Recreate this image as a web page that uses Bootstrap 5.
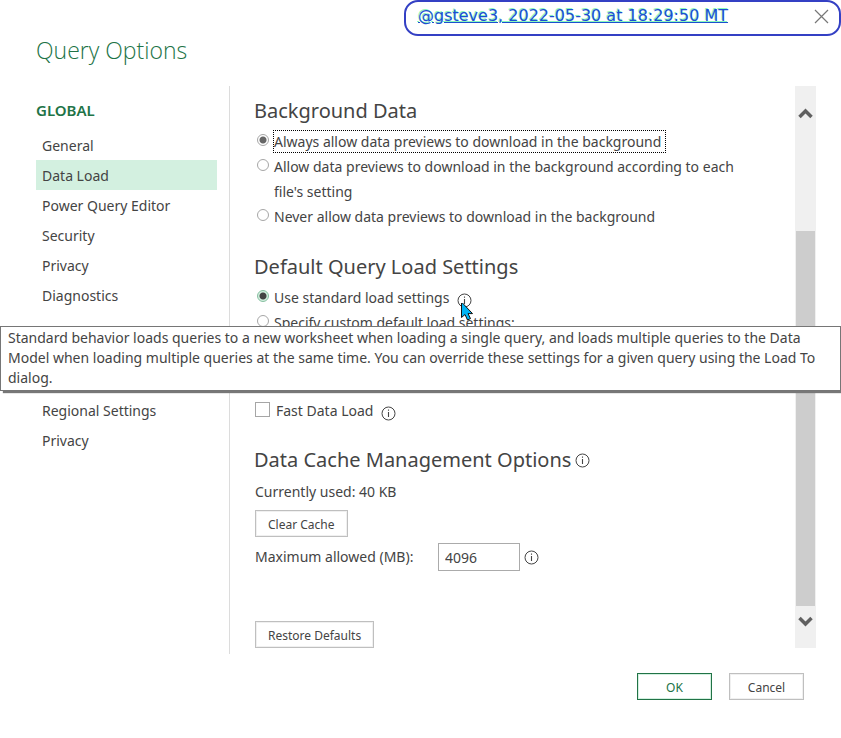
<!DOCTYPE html>
<html lang="en">
<head>
<meta charset="utf-8">
<meta name="viewport" content="width=device-width, initial-scale=1">
<title>Query Options</title>
<link href="https://cdn.jsdelivr.net/npm/bootstrap@5.3.0/dist/css/bootstrap.min.css" rel="stylesheet">
<style>
body { font-family: "Noto Sans", "Open Sans", sans-serif; font-size: 14px; line-height: 20px; color: #444; background: #fff; }
.dialog-box { padding: 36px 25px 36px 36px; }
.dialog-title { font-family: "Open Sans", sans-serif; font-size: 23px; line-height: 28px; font-weight: 300; color: #217346; margin: 0 0 22px; }
.stamp { position: absolute; top: 0; right: 0; width: 437px; height: 36px; padding: 0 10px 4px 12px; border: 2px solid #3440c4; border-radius: 14px; background: #fff; }
.stamp a { font-family: "DejaVu Sans", sans-serif; font-size: 16px; line-height: 20px; color: #1c4fd0; text-decoration: underline; text-shadow: -1px -1px 0 #3df58a99; }
.close-x { border: 0; background: none; padding: 0; line-height: 0; }
.options-nav { width: 194px; padding: 14px 12px 0 0; border-right: 1px solid #dcdcdc; }
.options-nav h2 { font-size: 15px; line-height: 20px; font-weight: 600; color: #217346; margin: 0 0 10px; }
.options-nav .nav-link { color: #444; padding: 6px 6px 4px; line-height: 20px; }
.options-nav .nav-link.active { background: #d3f0e0; }
.workbook-nav { margin-top: 85px; }
.pane { padding: 10px 44px 6px 24px; min-width: 0; }
.pane h2 { font-size: 20px; line-height: 30px; font-weight: 400; margin: 0; }
.choice { display: flex; line-height: 25px; }
.choice input { appearance: none; flex: none; width: 12px; height: 12px; margin: 5px 5px 0 3px; border: 1px solid #a6a6a6; border-radius: 50%; background: #fff; }
.choice input:checked { background: radial-gradient(circle, #666 0 3px, #fff 4px); }
.choice input.hot:checked { border-color: #86bfa0; background: radial-gradient(circle, #444 0 3px, #d3f0e0 4px); }
.focused-label { outline: 1px dotted #000; line-height: 21px; margin: 2px 0; padding-right: 4px; }
.choice input[type=checkbox] { width: 15px; height: 15px; margin: 4px 6px 0 1px; border-radius: 0; }
.info { flex: none; width: 15px; height: 15px; }
.bg-rows { margin-top: 3px; }
.load-section { margin-top: 23px; margin-bottom: 63px; }
.load-rows { margin-top: 3px; }
.cache-section { margin-top: 22px; }
.plain-btn { font-size: 12px; line-height: 17px; height: 27px; padding: 5px 12px 3px; color: #444; background: #fff; border: 1px solid #bfbfbf; border-radius: 0; box-shadow: inset 0 0 0 1px #f0f0f0; }
.cache-body { padding-left: 1px; }
.cache-used { margin: 7px 0 8px; }
.size-row { margin-top: 6px; margin-bottom: 50px; }
.dialog-btn { width: 75px; }
.ok-btn { color: #217346; border-color: #217346; box-shadow: inset 0 0 0 1px #d3f0e0; }
.size-box { width: 82px; height: 28px; padding: 2px 6px; font-size: 14px; color: #444; border: 1px solid #ababab; border-radius: 0; }
.size-label { width: 183px; }
.scroll-track { width: 21px; padding: 0 1px; margin-bottom: 6px; background: #f0f0f0; }
.scroll-thumb { flex: 375 0 0; background: #cdcdcd; }
.scroll-head { flex: 124 0 0; padding-top: 21px; }
.scroll-tail { flex: 33 0 0; padding-top: 9px; }
.scroll-head, .scroll-tail { line-height: 0; text-align: center; }
.dialog-actions { padding: 19px 12px 0 0; gap: 17px; }
.tip { position: absolute; top: 326px; left: 0; right: 0; padding: 1px 7px 2px; border: 1px solid #767676; background: #fff; box-shadow: 3px 2px 1px #777; }
.pointer { position: absolute; left: 1px; top: 14px; z-index: 5; }
</style>
</head>
<body class="position-relative overflow-x-hidden">
<svg class="d-none"><symbol id="info" viewBox="0 0 15 15"><circle cx="7.5" cy="7.5" r="6.5" fill="#fff" stroke="#444"/><path d="M7.5 6v5M7.5 3.5v1.3" stroke="#444" stroke-width="1.1"/></symbol></svg>
<div class="stamp d-flex align-items-center justify-content-between">
  <a href="#stamp">@gsteve3, 2022-05-30 at 18:29:50 MT</a>
  <button class="close-x" type="button" aria-label="Close"><svg width="15" height="15" viewBox="0 0 15 15"><path d="M1 1l13 13M14 1L1 14" stroke="#777" stroke-width="1.2"/></svg></button>
</div>
<div class="dialog-box">
  <h1 class="dialog-title">Query Options</h1>
  <div class="d-flex">
    <nav class="options-nav flex-shrink-0">
      <h2>GLOBAL</h2>
      <div class="nav flex-column">
        <a class="nav-link" href="#general">General</a>
        <a class="nav-link active" href="#load">Data Load</a>
        <a class="nav-link" href="#editor">Power Query Editor</a>
        <a class="nav-link" href="#security">Security</a>
        <a class="nav-link" href="#privacy">Privacy</a>
        <a class="nav-link" href="#diagnostics">Diagnostics</a>
      </div>
      <div class="nav flex-column workbook-nav">
        <a class="nav-link" href="#regional">Regional Settings</a>
        <a class="nav-link" href="#book-privacy">Privacy</a>
      </div>
    </nav>
    <main class="pane flex-grow-1">
      <section>
        <h2>Background Data</h2>
        <div class="bg-rows">
          <div class="choice"><input type="radio" name="bg" id="bg1" checked><label class="focused-label" for="bg1">Always allow data previews to download in the background</label></div>
          <div class="choice"><input type="radio" name="bg" id="bg2"><label for="bg2">Allow data previews to download in the background according to each file's setting</label></div>
          <div class="choice"><input type="radio" name="bg" id="bg3"><label for="bg3">Never allow data previews to download in the background</label></div>
        </div>
      </section>
      <section class="load-section">
        <h2>Default Query Load Settings</h2>
        <div class="load-rows">
          <div class="choice"><input class="hot" type="radio" name="ql" id="ql1" checked><label for="ql1">Use standard load settings</label>
            <span class="position-relative ms-2 mt-1"><svg class="info d-block mt-1"><use href="#info"/></svg>
            <svg class="pointer" width="16" height="20" viewBox="0 0 16 20"><path d="M3.500 -1v15.500l3.500-3 2.500 5.500 3-1.400-2.500-5h4.500z" fill="#00b4f5" stroke="#111"/></svg></span></div>
          <div class="choice"><input type="radio" name="ql" id="ql2"><label for="ql2">Specify custom default load settings:</label></div>
        </div>
      </section>
      <div class="choice"><input type="checkbox" id="fast"><label for="fast">Fast Data Load</label><svg class="info ms-2 mt-2"><use href="#info"/></svg></div>
      <section class="cache-section">
        <div class="d-flex align-items-center"><h2>Data Cache Management Options</h2><svg class="info ms-1"><use href="#info"/></svg></div>
        <div class="cache-body">
          <div class="cache-used">Currently used: 40 KB</div>
          <button class="btn plain-btn" type="button">Clear Cache</button>
          <div class="size-row d-flex align-items-center">
            <label class="size-label" for="size">Maximum allowed (MB):</label>
            <input class="size-box" id="size" type="text" value="4096">
            <svg class="info ms-1"><use href="#info"/></svg>
          </div>
          <button class="btn plain-btn" type="button">Restore Defaults</button>
        </div>
      </section>
    </main>
    <div class="scroll-track d-flex flex-column flex-shrink-0">
      <div class="scroll-head"><svg width="15" height="13" viewBox="0 0 15 13"><path d="M1.500 10l6-6 6 6" fill="none" stroke="#606060" stroke-width="3.500"/></svg></div>
      <div class="scroll-thumb"></div>
      <div class="scroll-tail"><svg width="15" height="13" viewBox="0 0 15 13"><path d="M1.500 3l6 6 6-6" fill="none" stroke="#606060" stroke-width="3.500"/></svg></div>
    </div>
  </div>
  <div class="dialog-actions d-flex justify-content-end">
    <button class="btn plain-btn dialog-btn ok-btn" type="button">OK</button>
    <button class="btn plain-btn dialog-btn" type="button">Cancel</button>
  </div>
</div>
<div class="tip" role="tooltip">Standard behavior loads queries to a new worksheet when loading a single query, and loads multiple queries to the Data Model when loading multiple queries at the same time. You can override these settings for a given query using the Load To dialog.</div>
<script src="https://cdn.jsdelivr.net/npm/bootstrap@5.3.0/dist/js/bootstrap.bundle.min.js"></script>
</body>
</html>
